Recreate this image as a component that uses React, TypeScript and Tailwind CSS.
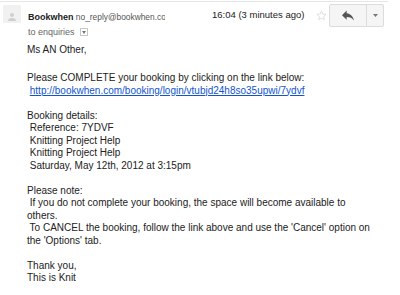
import React from "react";

const Line = ({ children }: { children?: React.ReactNode }) => (
  <div className="h-[12.5px] leading-[12.5px] whitespace-pre">{children}</div>
);

export default function App() {
  return (
    <div className="w-[400px] h-[295px] bg-white overflow-hidden font-['Liberation_Sans',Arial,sans-serif] text-[#222]">
      <div className="w-[388px] mt-[1px] border-t border-[#e6e6e6]" />
      <div className="flex items-start">
        <div className="ml-[3px] mt-[3px] w-[18px] h-[18px] bg-[#f1f1f1] flex items-end justify-center">
          <svg width="10" height="12" viewBox="0 0 10 12">
            <circle cx="5" cy="4" r="2" fill="#cfcfcf" />
            <path d="M1 10 Q1 7 5 7 Q9 7 9 10 Z" fill="#cfcfcf" />
          </svg>
        </div>
        <div className="ml-[7px] w-[137px]">
          <div className="mt-[6px] h-[14px] leading-[14px] whitespace-nowrap overflow-hidden">
            <span className="font-bold text-[9px] text-[#222]">Bookwhen</span>
            <span className="text-[8.4px] text-[#555]"> no_reply@bookwhen.com</span>
          </div>
          <div className="mt-[3px] h-[14px] leading-[14px] flex items-center text-[9px] text-[#666] whitespace-nowrap">
            <span>to enquiries</span>
            <span className="ml-[5px] w-[8px] h-[8px] border border-[#c6c6c6] flex items-center justify-center">
              <svg width="4" height="3" viewBox="0 0 4 3">
                <path d="M0 0 L4 0 L2 3 Z" fill="#777" />
              </svg>
            </span>
          </div>
        </div>
        <div className="ml-[47px] mt-[6px] h-[14px] leading-[14px] text-[9.5px] text-[#222] whitespace-nowrap w-[100px]">
          16:04 (3 minutes ago)
        </div>
        <div className="ml-[4px] mt-[8px]">
          <svg width="11" height="11" viewBox="0 0 24 24">
            <path
              d="M12 2.5l2.9 6.4 7 .7-5.3 4.7 1.6 6.9L12 17.6l-6.2 3.6 1.6-6.9L2.1 9.6l7-.7z"
              fill="none"
              stroke="#d4d4d4"
              strokeWidth="1.6"
            />
          </svg>
        </div>
        <div className="ml-[2px] mt-[2px] h-[23px] flex border border-[#dcdcdc] rounded-[2px] bg-[#f5f5f5]">
          <div className="w-[37px] flex items-center justify-center border-r border-[#dcdcdc]">
            <svg width="12" height="11" viewBox="3 5 18 15">
              <path d="M10 9V5l-7 7 7 7v-4.1c5 0 8.5 1.6 11 5.1-1-5-4-10-11-11z" fill="#555" />
            </svg>
          </div>
          <div className="w-[16px] flex items-center justify-center">
            <svg width="5" height="3" viewBox="0 0 5 3">
              <path d="M0 0 L5 0 L2.5 3 Z" fill="#777" />
            </svg>
          </div>
        </div>
      </div>
      <div className="pl-[27px] mt-[5px] text-[10px]">
        <Line>Ms AN Other,</Line>
        <div className="h-[15.5px]" />
        <Line>Please COMPLETE your booking by clicking on the link below:</Line>
        <Line>
          {" "}
          <span className="text-[#1155cc] underline">http://bookwhen.com/booking/login/vtubjd24h8so35upwi/7ydvf</span>
        </Line>
        <Line />
        <Line>Booking details:</Line>
        <Line> Reference: 7YDVF</Line>
        <Line> Knitting Project Help</Line>
        <Line> Knitting Project Help</Line>
        <Line> Saturday, May 12th, 2012 at 3:15pm</Line>
        <Line />
        <Line>Please note:</Line>
        <Line> If you do not complete your booking, the space will become available to</Line>
        <Line>others.</Line>
        <Line> To CANCEL the booking, follow the link above and use the 'Cancel' option on</Line>
        <Line>the 'Options' tab.</Line>
        <Line />
        <Line>Thank you,</Line>
        <Line>This is Knit</Line>
      </div>
    </div>
  );
}
